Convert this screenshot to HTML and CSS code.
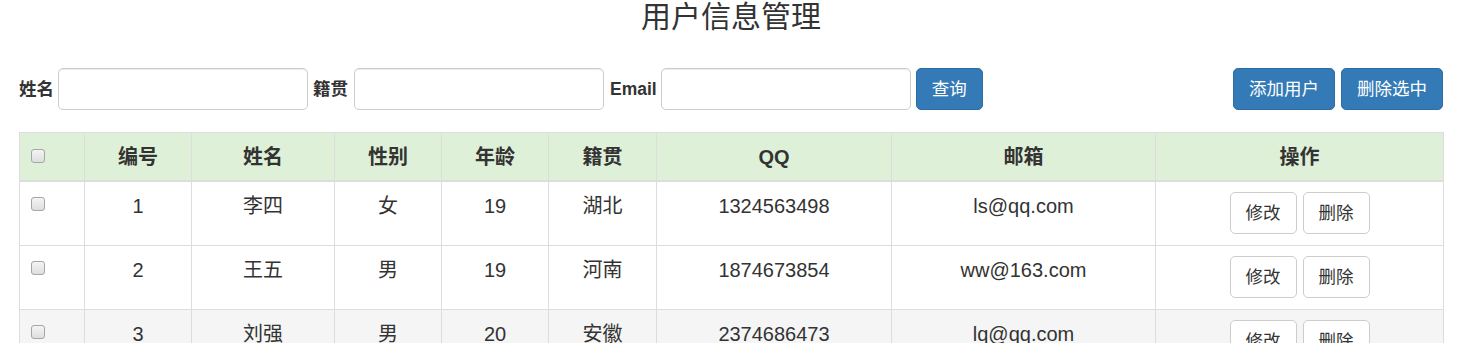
FILE: index.html
```html
<!DOCTYPE html>
<html lang="zh-CN">
<head>
<meta charset="utf-8">
<title>用户信息管理</title>
<link rel="stylesheet" href="styles.css">
</head>
<body>
<div class="page">
  <h3 class="title">用户信息管理</h3>
  <div class="toolbar">
    <form class="search">
      <label class="lbl">姓名</label>
      <input class="field" type="text">
      <label class="lbl">籍贯</label>
      <input class="field" type="text">
      <label class="lbl">Email</label>
      <input class="field" type="text">
      <button type="button" class="btn btn-primary">查询</button>
    </form>
    <div class="actions">
      <button type="button" class="btn btn-primary">添加用户</button>
      <button type="button" class="btn btn-primary">删除选中</button>
    </div>
  </div>
  <table class="grid">
    <colgroup>
      <col class="c-chk"><col class="c-id"><col class="c-name"><col class="c-sex"><col class="c-age"><col class="c-addr"><col class="c-qq"><col class="c-mail"><col class="c-op">
    </colgroup>
    <thead>
      <tr class="head">
        <th class="chk"><input type="checkbox" class="cb"></th>
        <th>编号</th><th>姓名</th><th>性别</th><th>年龄</th><th>籍贯</th><th>QQ</th><th>邮箱</th><th>操作</th>
      </tr>
    </thead>
    <tbody>
      <tr>
        <td class="chk"><input type="checkbox" class="cb"></td>
        <td>1</td><td>李四</td><td>女</td><td>19</td><td>湖北</td><td>1324563498</td><td>ls@qq.com</td>
        <td class="op"><div class="ops"><button type="button" class="btn btn-default">修改</button><button type="button" class="btn btn-default">删除</button></div></td>
      </tr>
      <tr>
        <td class="chk"><input type="checkbox" class="cb"></td>
        <td>2</td><td>王五</td><td>男</td><td>19</td><td>河南</td><td>1874673854</td><td>ww@163.com</td>
        <td class="op"><div class="ops"><button type="button" class="btn btn-default">修改</button><button type="button" class="btn btn-default">删除</button></div></td>
      </tr>
      <tr class="hover">
        <td class="chk"><input type="checkbox" class="cb"></td>
        <td>3</td><td>刘强</td><td>男</td><td>20</td><td>安徽</td><td>2374686473</td><td>lq@qq.com</td>
        <td class="op"><div class="ops"><button type="button" class="btn btn-default">修改</button><button type="button" class="btn btn-default">删除</button></div></td>
      </tr>
    </tbody>
  </table>
</div>
</body>
</html>
```

FILE: styles.css
```css
html, body {
  margin: 0;
  padding: 0;
  background: #fff;
}
body {
  font-family: "Liberation Sans", "Noto Sans CJK SC", sans-serif;
  font-size: 17.5px;
  line-height: 25px;
  color: #333;
}
.page {
  width: 1463px;
  box-sizing: border-box;
  padding: 0 20px 0 19px;
}
.title {
  margin: 0 0 35px;
  font-size: 30px;
  line-height: 33px;
  font-weight: 400;
  text-align: center;
  color: #333;
}
.toolbar {
  display: flex;
  justify-content: space-between;
  align-items: center;
  height: 42px;
}
.search {
  display: flex;
  align-items: center;
  margin: 0;
}
.lbl {
  font-weight: 700;
  margin: 0 4px 0 0;
}
.search label:nth-of-type(2) { margin-right: 6px; }
.search label:nth-of-type(3) { margin-left: 1px; margin-right: 4px; }
.field {
  width: 250px;
  height: 42px;
  box-sizing: border-box;
  border: 1px solid #ccc;
  border-radius: 5px;
  box-shadow: inset 0 1px 1px rgba(0,0,0,.075);
  padding: 7px 15px;
  font: inherit;
  margin: 0 5px 0 0;
  background: #fff;
}
.btn {
  display: inline-block;
  height: 42px;
  box-sizing: border-box;
  padding: 7px 15px;
  font-family: inherit;
  font-size: 17.5px;
  line-height: 25px;
  border: 1px solid transparent;
  border-radius: 5px;
  cursor: pointer;
  white-space: nowrap;
}
.btn-primary {
  background: #337ab7;
  border-color: #2e6da4;
  color: #fff;
}
.btn-default {
  background: #fff;
  border-color: #ccc;
  color: #333;
}
.actions {
  display: flex;
  gap: 6px;
}
.grid {
  margin-top: 22px;
  width: 1424px;
  table-layout: fixed;
  border-collapse: collapse;
  border: 1px solid #ddd;
  font-size: 20px;
}
.c-chk { width: 65px; }
.c-id { width: 107px; }
.c-name { width: 143px; }
.c-sex { width: 107px; }
.c-age { width: 107px; }
.c-addr { width: 108px; }
.c-qq { width: 235px; }
.c-mail { width: 264px; }
.c-op { width: 288px; }
.grid th, .grid td {
  border: 1px solid #ddd;
  text-align: center;
  padding: 12px 10px 9px;
  line-height: 25px;
}
.grid th {
  background: #dff0d8;
  font-weight: 700;
  vertical-align: bottom;
  border-bottom-width: 2px;
  padding: 12px 10px 10px;
}
.grid td {
  vertical-align: top;
}
.grid .chk {
  text-align: left;
}
.grid th.chk {
  vertical-align: top;
}
.grid tr.hover td {
  background: #f5f5f5;
}
.cb {
  -webkit-appearance: none;
  appearance: none;
  display: block;
  width: 14px;
  height: 14px;
  margin: 3px 0 0 1px;
  box-sizing: border-box;
  border: 1px solid #a6a6a6;
  border-radius: 3px;
  background: linear-gradient(#f4f4f4, #dedede);
}
.grid th.chk .cb { margin-top: 4px; }
.ops {
  display: flex;
  justify-content: center;
  gap: 6px;
  margin: -2px 0 2px;
}
.ops .btn { height: 42px; }
```
